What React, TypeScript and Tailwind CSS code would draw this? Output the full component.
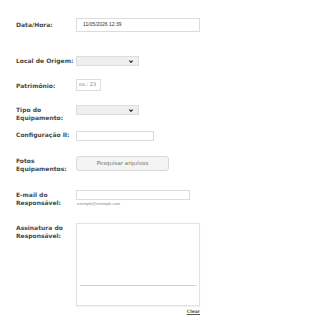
const LABEL =
  "w-[60px] shrink-0 font-['DejaVu_Sans',sans-serif] text-[6px] leading-[8px] font-bold text-[#484848]";

const Select = () => (
  <div className="flex h-[10px] w-[63px] items-center justify-end border border-[#dcdcdc] bg-[#efefef] pr-[5px]">
    <svg width="4" height="3" viewBox="0 0 4 3">
      <path d="M0.4 0.5 L2 2.3 L3.6 0.5" fill="none" stroke="#222" strokeWidth="1.1" />
    </svg>
  </div>
);

export default function App() {
  return (
    <div className="h-[326px] w-[310px] bg-white pl-4 font-['DejaVu_Sans',sans-serif]">
      <div className="h-[18px]" />

      <div className="flex h-[14px] items-center">
        <span className={LABEL}>Data/Hora:</span>
        <div className="flex h-[14px] w-[124px] items-center border border-[#dcdcdc] pl-[6px] font-['Liberation_Sans',sans-serif] text-[5px] text-[#333]">
          11/05/2026 12:39
        </div>
      </div>

      <div className="mt-[24px] flex h-[10px] items-center">
        <span className={LABEL}>Local de Origem:</span>
        <Select />
      </div>

      <div className="mt-[13px] flex h-[12px] items-center">
        <span className={`${LABEL} pt-[1px]`}>Patrimônio:</span>
        <div className="flex h-[12px] w-[25px] items-center border border-[#dcdcdc] pl-[2px] text-[5px] text-[#8a8a8a]">
          ex.: 23
        </div>
      </div>

      <div className="mt-[14px] flex h-[14px] items-start">
        <span className={`${LABEL} pt-[1px]`}>
          Tipo do
          <br />
          Equipamento:
        </span>
        <Select />
      </div>

      <div className="mt-[12px] flex h-[10px] items-start">
        <span className={LABEL}>Configuração II:</span>
        <div className="h-[10px] w-[78px] border border-[#dcdcdc]" />
      </div>

      <div className="mt-[15px] flex h-[15px] items-start">
        <span className={`${LABEL} pt-[1px]`}>
          Fotos
          <br />
          Equipamentos:
        </span>
        <div className="flex h-[15px] w-[93px] items-center justify-center rounded-[3px] border border-[#d8d8d8] bg-[#f4f4f4] text-[5.5px] text-[#777]">
          Pesquisar arquivos
        </div>
      </div>

      <div className="mt-[19px] flex h-[17px] items-start">
        <span className={`${LABEL} pt-[1px]`}>
          E-mail do
          <br />
          Responsável:
        </span>
        <div className="flex flex-col">
          <div className="h-[10px] w-[114px] border border-[#dcdcdc]" />
          <span className="mt-[1px] pl-[1px] font-['Liberation_Sans',sans-serif] text-[4px] leading-[5px] text-[#888]">
            exemplo@exemple.com
          </span>
        </div>
      </div>

      <div className="mt-[16px] flex items-start">
        <span className={`${LABEL} pt-[1px]`}>
          Assinatura do
          <br />
          Responsável:
        </span>
        <div className="flex flex-col items-end">
          <div className="flex h-[83px] w-[124px] flex-col justify-end border border-[#e2e2e2] px-[3px] pb-[19px] shadow-[0_1px_1px_rgba(0,0,0,0.05)]">
            <div className="h-px w-full bg-[#d0d0d0]" />
          </div>
          <span className="mt-[3px] text-[4.5px] leading-[5px] font-bold text-[#555] underline">
            Clear
          </span>
        </div>
      </div>
    </div>
  );
}
